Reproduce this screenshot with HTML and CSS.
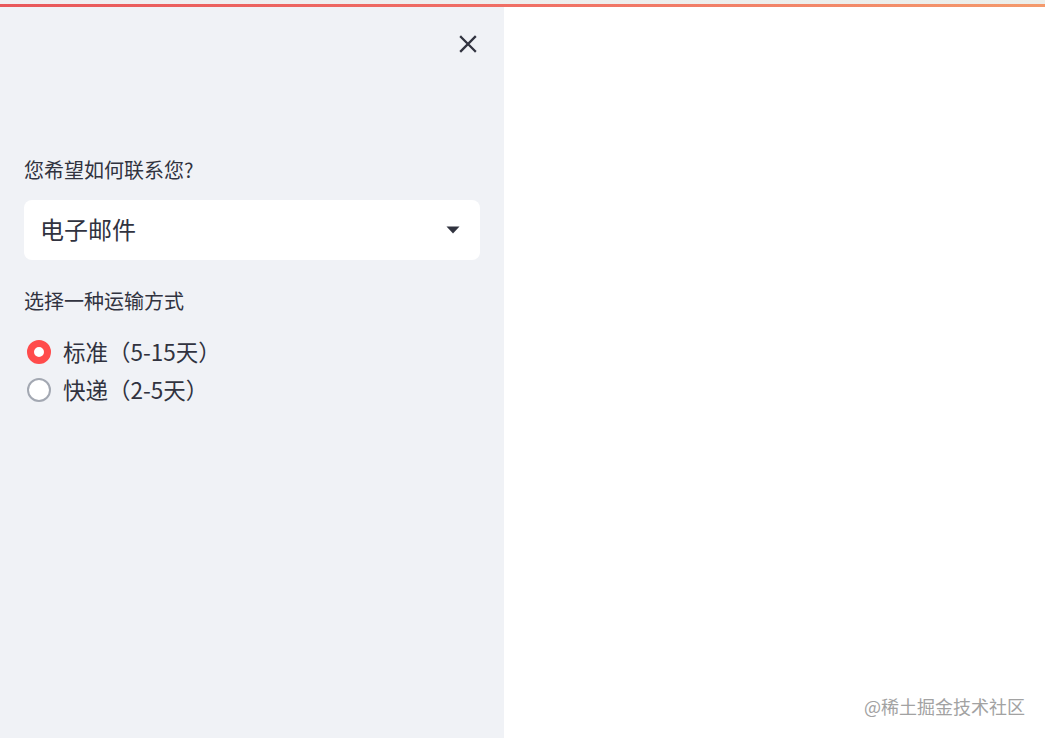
FILE: index.html
```html
<!DOCTYPE html>
<html lang="zh-CN">
<head>
<meta charset="utf-8">
<title>Streamlit</title>
<link rel="stylesheet" href="styles.css">
</head>
<body>
<div class="topstrip"></div>
<div class="deco"></div>
<div class="layout">
  <aside class="sidebar">
    <div class="side-head">
      <button class="close" aria-label="关闭">
        <svg width="18" height="18" viewBox="0 0 18 18"><path d="M2 2 L16 16 M16 2 L2 16" stroke="#31333f" stroke-width="2.3" stroke-linecap="square" fill="none"/></svg>
      </button>
    </div>
    <div class="field">
      <div class="label">您希望如何联系您?</div>
      <div class="select">
        <span class="select-value">电子邮件</span>
        <svg class="caret" width="14" height="8" viewBox="0 0 14 8"><path d="M0.5 0.5 H13.5 L7 7.5 Z" fill="#31333f"/></svg>
      </div>
    </div>
    <div class="field field-radio">
      <div class="label">选择一种运输方式</div>
      <div class="radios">
        <div class="radio-row">
          <span class="radio radio-on"></span>
          <span class="radio-text">标准（5-15天）</span>
        </div>
        <div class="radio-row">
          <span class="radio"></span>
          <span class="radio-text">快递（2-5天）</span>
        </div>
      </div>
    </div>
  </aside>
  <main class="main">
    <div class="watermark">@稀土掘金技术社区</div>
  </main>
</div>
</body>
</html>
```

FILE: styles.css
```css
* { box-sizing: border-box; }
html, body {
  margin: 0;
  padding: 0;
  width: 1045px;
  height: 738px;
  overflow: hidden;
  background: #ffffff;
  font-family: "Noto Sans CJK SC", "Noto Sans", sans-serif;
  color: #31333f;
}
.topstrip {
  height: 4px;
  background: linear-gradient(to right, #f1eef1, #eceeea);
}
.deco {
  height: 3px;
  background: linear-gradient(to right, #e9575a 0%, #f06f65 50%, #f49a6c 100%);
}
.layout {
  display: flex;
  height: 731px;
}
.sidebar {
  width: 504px;
  flex: none;
  background: #f0f2f6;
  padding: 0 24px;
}
.side-head {
  display: flex;
  justify-content: flex-end;
  height: 149px;
  padding-top: 28px;
}
.close {
  width: 18px;
  height: 18px;
  margin-right: 3px;
  padding: 0;
  border: none;
  background: transparent;
  display: flex;
}
.label {
  font-size: 20px;
  line-height: 28px;
  padding-bottom: 2px;
  margin-bottom: -2px;
  color: #31333f;
}
.select {
  margin-top: 16px;
  height: 60px;
  background: #ffffff;
  border-radius: 8px;
  display: flex;
  align-items: center;
  justify-content: space-between;
  padding: 0 20px 0 16px;
}
.select-value {
  font-size: 24px;
  line-height: 30px;
  padding-bottom: 3px;
}
.caret {
  display: block;
}
.field-radio {
  margin-top: 27px;
}
.radios {
  margin-top: 18px;
  display: flex;
  flex-direction: column;
}
.radio-row {
  display: flex;
  align-items: center;
  height: 38px;
}
.radio {
  width: 24px;
  height: 24px;
  margin-left: 3px;
  margin-right: 12px;
  border-radius: 50%;
  border: 2.5px solid #a3a8b2;
  background: #ffffff;
  flex: none;
}
.radio-on {
  border: 7.5px solid #ff4b4b;
  background: #ffffff;
}
.radio-text {
  font-size: 22.5px;
  line-height: 30px;
  padding-bottom: 3px;
}
.main {
  flex: 1;
  position: relative;
  background: #ffffff;
}
.watermark {
  position: absolute;
  right: 20px;
  bottom: 21px;
  font-size: 18px;
  line-height: 22px;
  color: #a2a2a2;
}
```
